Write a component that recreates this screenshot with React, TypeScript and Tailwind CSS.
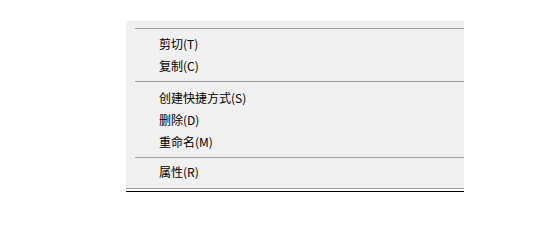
import React from "react";

const font = { fontFamily: '"Noto Sans CJK SC", "Microsoft YaHei", sans-serif' };

function Item({ label, className = "" }: { label: string; className?: string }) {
  return (
    <div className={`flex h-[22px] items-center pl-[33px] text-[12px] leading-none text-black ${className}`}>
      {label}
    </div>
  );
}

function Sep({ className = "" }: { className?: string }) {
  return <div className={`ml-[9px] h-px bg-[#a0a0a0] ${className}`} />;
}

export default function App() {
  return (
    <div className="h-[207px] w-[557px] bg-white" style={font}>
      <div className="ml-[126px] w-[338px] pt-[21px]">
        <div className="bg-[#f0f0f0] pt-[7px]">
          <Sep />
          <Item label="剪切(T)" className="mt-[4px]" />
          <Item label="复制(C)" />
          <Sep className="mt-[4px]" />
          <Item label="创建快捷方式(S)" className="mt-[5px]" />
          <Item label="删除(D)" />
          <Item label="重命名(M)" />
          <Sep className="mt-[4px]" />
          <Item label="属性(R)" className="mt-[3px]" />
          <div className="h-[5px]" />
          <div className="h-px bg-[#a0a0a0]" />
        </div>
        <div className="mt-[2px] h-px bg-black" />
      </div>
    </div>
  );
}
